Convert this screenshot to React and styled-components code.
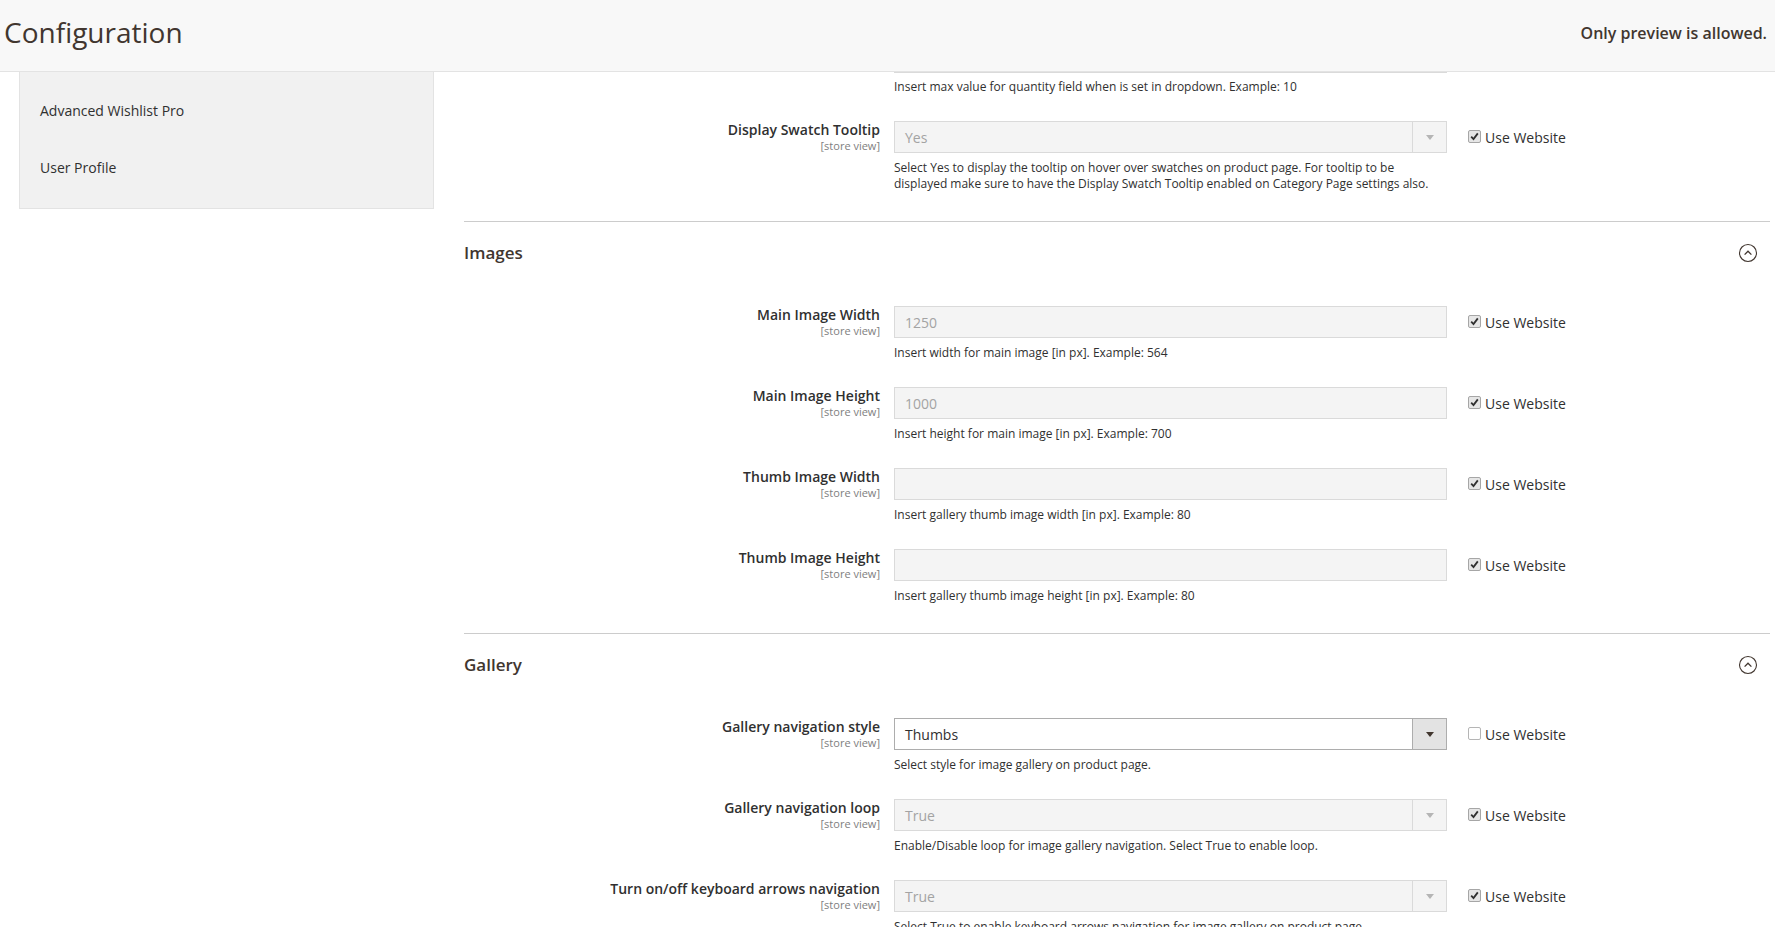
import styled, { createGlobalStyle } from "styled-components";

const GlobalStyle = createGlobalStyle`
  * { box-sizing: border-box; }
  body {
    margin: 0;
    background: #ffffff;
    font-family: "Open Sans", "Noto Sans", Arial, sans-serif;
    color: #303030;
    overflow: hidden;
  }
`;

const Page = styled.div`
  width: 100%;
  min-height: 100vh;
`;

const Header = styled.header`
  height: 72px;
  background: #f8f8f8;
  border-bottom: 1px solid #e3e3e3;
  display: flex;
  align-items: center;
  justify-content: space-between;
  padding: 0 8px 0 4px;
`;

const Title = styled.h1`
  margin: 0 0 8px;
  font-size: 28px;
  font-weight: 400;
  color: #41362f;
  line-height: 1;
`;

const Notice = styled.div`
  font-size: 16px;
  font-weight: 600;
  color: #41362f;
  margin-bottom: 6px;
`;

const Body = styled.div`
  display: flex;
  align-items: flex-start;
  padding-left: 19px;
`;

const Sidebar = styled.nav`
  width: 415px;
  flex-shrink: 0;
  background: #f1f1f1;
  border: 1px solid #e3e3e3;
  border-top: none;
  padding: 10px 0 12px;
`;

const SideItem = styled.div`
  height: 57px;
  display: flex;
  align-items: center;
  padding: 0 20px;
  font-size: 14px;
  color: #303030;
`;

const Main = styled.main`
  flex: 1;
  margin-left: 30px;
  margin-right: 5px;
`;

const Section = styled.section`
  border-top: ${(p) => (p.$first ? "none" : "1px solid #cccccc")};
  padding-bottom: 3px;
`;

const SectionHead = styled.div`
  display: flex;
  align-items: center;
  justify-content: space-between;
  padding: 21px 12px 43px 0;
  height: 84px;
`;

const SectionTitle = styled.h3`
  margin: 0;
  font-size: 17px;
  font-weight: 600;
  line-height: 20px;
  color: #41362f;
`;

const Row = styled.div`
  display: grid;
  grid-template-columns: 416px 553px 1fr;
  column-gap: 14px;
  padding-bottom: 26px;
`;

const LabelCell = styled.div`
  text-align: right;
`;

const Label = styled.div`
  font-size: 14px;
  font-weight: 600;
  line-height: 18px;
  color: #303030;
`;

const Scope = styled.div`
  font-size: 11px;
  line-height: 13px;
  color: #808080;
`;

const ControlCell = styled.div`
  display: flex;
  flex-direction: column;
`;

const Field = styled.div`
  height: ${(p) => (p.$stub ? "1px" : "32px")};
  border: 1px solid ${(p) => (p.$enabled ? "#adadad" : "#dadada")};
  border-top-width: ${(p) => (p.$stub ? "0" : "1px")};
  background: ${(p) => (p.$enabled ? "#ffffff" : "#f4f4f4")};
  display: flex;
  align-items: stretch;
  font-size: 14px;
  color: ${(p) => (p.$enabled ? "#303030" : "#a3a3a3")};
`;

const Value = styled.div`
  flex: 1;
  display: flex;
  align-items: center;
  padding: 0 10px;
`;

const Arrow = styled.div`
  width: 34px;
  border-left: 1px solid ${(p) => (p.$enabled ? "#adadad" : "#dadada")};
  background: ${(p) => (p.$enabled ? "#e3e3e3" : "transparent")};
  display: flex;
  align-items: center;
  justify-content: center;

  &::after {
    content: "";
    border-left: 4px solid transparent;
    border-right: 4px solid transparent;
    border-top: 5px solid ${(p) => (p.$enabled ? "#41362f" : "#b5b5b5")};
  }
`;

const Note = styled.div`
  margin-top: ${(p) => (p.$tight ? "6px" : "7px")};
  font-size: 12px;
  line-height: 16px;
  color: #303030;
  max-width: 540px;
`;

const UseCell = styled.label`
  height: 32px;
  display: flex;
  align-items: center;
  gap: 4px;
  padding-left: 7px;
  font-size: 14px;
  color: #303030;
`;

const Box = styled.span`
  width: 13px;
  height: 13px;
  border: 1px solid ${(p) => (p.$checked ? "#a6a6a6" : "#b5b5b5")};
  border-radius: 2px;
  background: ${(p) => (p.$checked ? "#e6e6e6" : "#ffffff")};
  display: flex;
  align-items: center;
  justify-content: center;
  margin-top: -1px;
`;

const Toggle = () => (
  <svg width="20" height="20" viewBox="0 0 20 20">
    <circle cx="10" cy="10" r="8.5" fill="none" stroke="#41362f" strokeWidth="1.1" />
    <path d="M6.6 11.6 L10 8.2 L13.4 11.6" fill="none" stroke="#41362f" strokeWidth="1.3" />
  </svg>
);

const Check = ({ checked }) => (
  <Box $checked={checked}>
    {checked && (
      <svg width="9" height="9" viewBox="0 0 9 9">
        <path d="M1.2 4.6 L3.5 7 L7.8 1.4" fill="none" stroke="#303030" strokeWidth="1.8" />
      </svg>
    )}
  </Box>
);

const FieldRow = ({ label, value, select, enabled, note, checked = true, stub }) => (
  <Row>
    <LabelCell>
      {label && <Label>{label}</Label>}
      {label && <Scope>[store view]</Scope>}
    </LabelCell>
    <ControlCell>
      <Field $enabled={enabled} $stub={stub}>
        {!stub && <Value>{value}</Value>}
        {select && <Arrow $enabled={enabled} />}
      </Field>
      {note && <Note $tight={stub}>{note}</Note>}
    </ControlCell>
    <div>
      {label && (
        <UseCell>
          <Check checked={checked} />
          Use Website
        </UseCell>
      )}
    </div>
  </Row>
);

const images = [
  { label: "Main Image Width", value: "1250", note: "Insert width for main image [in px]. Example: 564" },
  { label: "Main Image Height", value: "1000", note: "Insert height for main image [in px]. Example: 700" },
  { label: "Thumb Image Width", value: "", note: "Insert gallery thumb image width [in px]. Example: 80" },
  { label: "Thumb Image Height", value: "", note: "Insert gallery thumb image height [in px]. Example: 80" },
];

const gallery = [
  {
    label: "Gallery navigation style",
    value: "Thumbs",
    enabled: true,
    checked: false,
    note: "Select style for image gallery on product page.",
  },
  {
    label: "Gallery navigation loop",
    value: "True",
    note: "Enable/Disable loop for image gallery navigation. Select True to enable loop.",
  },
  {
    label: "Turn on/off keyboard arrows navigation",
    value: "True",
    note: "Select True to enable keyboard arrows navigation for image gallery on product page.",
  },
];

export default function App() {
  return (
    <Page>
      <GlobalStyle />
      <Header>
        <Title>Configuration</Title>
        <Notice>Only preview is allowed.</Notice>
      </Header>
      <Body>
        <Sidebar>
          <SideItem>Advanced Wishlist Pro</SideItem>
          <SideItem>User Profile</SideItem>
        </Sidebar>
        <Main>
          <Section $first>
            <FieldRow stub note="Insert max value for quantity field when is set in dropdown. Example: 10" />
            <FieldRow
              label="Display Swatch Tooltip"
              value="Yes"
              select
              note="Select Yes to display the tooltip on hover over swatches on product page. For tooltip to be displayed make sure to have the Display Swatch Tooltip enabled on Category Page settings also."
            />
          </Section>
          <Section>
            <SectionHead>
              <SectionTitle>Images</SectionTitle>
              <Toggle />
            </SectionHead>
            {images.map((f) => (
              <FieldRow key={f.label} {...f} />
            ))}
          </Section>
          <Section>
            <SectionHead>
              <SectionTitle>Gallery</SectionTitle>
              <Toggle />
            </SectionHead>
            {gallery.map((f) => (
              <FieldRow key={f.label} select {...f} />
            ))}
          </Section>
        </Main>
      </Body>
    </Page>
  );
}
